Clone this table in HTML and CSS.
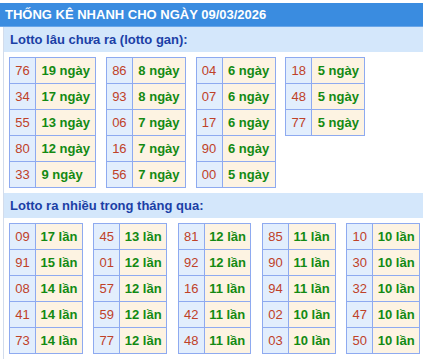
FILE: index.html
```html
<!DOCTYPE html>
<html lang="vi">
<head>
<meta charset="utf-8">
<link rel="stylesheet" href="styles.css">
</head>
<body>
<div class="header">THỐNG KÊ NHANH CHO NGÀY 09/03/2026</div>
<div class="wrap">
  <div class="bar">Lotto lâu chưa ra (lotto gan):</div>
  <div class="tables gan">
    <table><tr><td class="n">76</td><td class="v">19 ngày</td></tr><tr><td class="n">34</td><td class="v">17 ngày</td></tr><tr><td class="n">55</td><td class="v">13 ngày</td></tr><tr><td class="n">80</td><td class="v">12 ngày</td></tr><tr><td class="n">33</td><td class="v">9 ngày</td></tr></table>
    <table><tr><td class="n">86</td><td class="v">8 ngày</td></tr><tr><td class="n">93</td><td class="v">8 ngày</td></tr><tr><td class="n">06</td><td class="v">7 ngày</td></tr><tr><td class="n">16</td><td class="v">7 ngày</td></tr><tr><td class="n">56</td><td class="v">7 ngày</td></tr></table>
    <table><tr><td class="n">04</td><td class="v">6 ngày</td></tr><tr><td class="n">07</td><td class="v">6 ngày</td></tr><tr><td class="n">17</td><td class="v">6 ngày</td></tr><tr><td class="n">90</td><td class="v">6 ngày</td></tr><tr><td class="n">00</td><td class="v">5 ngày</td></tr></table>
    <table><tr><td class="n">18</td><td class="v">5 ngày</td></tr><tr><td class="n">48</td><td class="v">5 ngày</td></tr><tr><td class="n">77</td><td class="v">5 ngày</td></tr></table>
  </div>
  <div class="bar bar2">Lotto ra nhiều trong tháng qua:</div>
  <div class="tables nhieu">
    <table><tr><td class="n">09</td><td class="v">17 lần</td></tr><tr><td class="n">91</td><td class="v">15 lần</td></tr><tr><td class="n">08</td><td class="v">14 lần</td></tr><tr><td class="n">41</td><td class="v">14 lần</td></tr><tr><td class="n">73</td><td class="v">14 lần</td></tr></table>
    <table><tr><td class="n">45</td><td class="v">13 lần</td></tr><tr><td class="n">01</td><td class="v">12 lần</td></tr><tr><td class="n">57</td><td class="v">12 lần</td></tr><tr><td class="n">59</td><td class="v">12 lần</td></tr><tr><td class="n">77</td><td class="v">12 lần</td></tr></table>
    <table><tr><td class="n">81</td><td class="v">12 lần</td></tr><tr><td class="n">92</td><td class="v">12 lần</td></tr><tr><td class="n">16</td><td class="v">11 lần</td></tr><tr><td class="n">42</td><td class="v">11 lần</td></tr><tr><td class="n">48</td><td class="v">11 lần</td></tr></table>
    <table><tr><td class="n">85</td><td class="v">11 lần</td></tr><tr><td class="n">90</td><td class="v">11 lần</td></tr><tr><td class="n">94</td><td class="v">11 lần</td></tr><tr><td class="n">02</td><td class="v">10 lần</td></tr><tr><td class="n">03</td><td class="v">10 lần</td></tr></table>
    <table><tr><td class="n">10</td><td class="v">10 lần</td></tr><tr><td class="n">30</td><td class="v">10 lần</td></tr><tr><td class="n">32</td><td class="v">10 lần</td></tr><tr><td class="n">47</td><td class="v">10 lần</td></tr><tr><td class="n">50</td><td class="v">10 lần</td></tr></table>
  </div>
</div>
</body>
</html>
```
FILE: styles.css
```css
html, body {
  margin: 0;
  padding: 0;
  background: #ffffff;
  font-family: "Liberation Sans", Arial, sans-serif;
}
body {
  padding-top: 3px;
}
.header {
  height: 23px;
  line-height: 23px;
  background: #3a8ce0;
  color: #ffffff;
  font-weight: bold;
  font-size: 13px;
  padding-left: 5px;
  border-bottom: 1px solid #6aa6e8;
}
.wrap {
  margin-left: 3px;
  border-left: 1px solid #d2dcec;
  padding-bottom: 6px;
}
.bar {
  height: 25px;
  line-height: 25px;
  background: #d4e7fb;
  color: #1b3fa6;
  font-weight: bold;
  font-size: 13px;
  padding-left: 6px;
}
.bar2 {
  margin-top: 5px;
}
.tables {
  display: flex;
  align-items: flex-start;
  padding-left: 5px;
}
.gan {
  margin-top: 5px;
  gap: 9.5px;
}
.nhieu {
  margin-top: 5px;
  gap: 10.5px;
}
table {
  border-collapse: collapse;
}
td {
  border: 1px solid #8eaaf0;
  height: 25px;
  padding: 0;
  font-size: 13px;
  white-space: nowrap;
}
td.n {
  background: #e2eefd;
  color: #bf4128;
  padding: 0 5.25px;
}
td.v {
  background: #fdf3e2;
  color: #138a13;
  font-weight: bold;
  padding: 0 5.5px;
}
.nhieu td.v {
  padding: 0 4.5px;
}
```
